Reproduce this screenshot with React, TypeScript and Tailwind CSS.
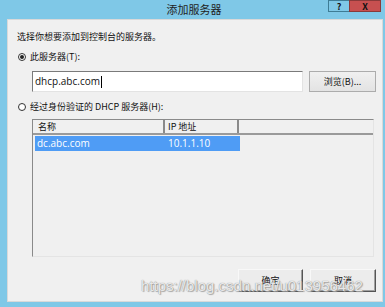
const cjk = "font-['Microsoft_YaHei','Noto_Sans_CJK_SC',sans-serif]";

function Radio({ checked }: { checked?: boolean }) {
  return (
    <span className="flex h-[8px] w-[8px] items-center justify-center rounded-full border border-[#333] bg-white">
      {checked && <span className="h-[4px] w-[4px] rounded-full bg-[#222]" />}
    </span>
  );
}

function Button3D({ label, className = '' }: { label: string; className?: string }) {
  return (
    <button
      className={`flex h-[23px] items-center justify-center border border-t-[#f8f8f8] border-l-[#f8f8f8] border-r-[#555] border-b-[#555] bg-[#ececec] text-[9px] text-[#111] shadow-[inset_-1px_-1px_0_#a0a0a0] ${className}`}
    >
      {label}
    </button>
  );
}

export default function App() {
  return (
    <div className={`relative flex h-[307px] w-[385px] flex-col bg-[#7fc8e7] ${cjk}`}>
      {/* title bar */}
      <div className="grid h-[19px] grid-cols-[1fr_auto_1fr]">
        <div />
        <div className="pl-[3px] pt-[2px] text-[11px] leading-[15px] text-[#222]">添加服务器</div>
        <div className="flex justify-end pr-[4px]">
          <div className="flex h-[12px] w-[21px] items-center justify-center border border-[#3e7c95] border-r-0 bg-[#7fc8e7] text-[9px] font-bold leading-none text-[#111]">
            ?
          </div>
          <div className="flex h-[12px] w-[32px] items-center justify-center border border-[#8a3a3a] bg-[#c75050] text-[9px] font-bold leading-none text-[#111]">
            X
          </div>
        </div>
      </div>

      {/* client area */}
      <div className="ml-[7px] mr-[2px] flex h-[283px] flex-col border border-[#d9d9d9] bg-[#f0f0f0] pl-[9px] pt-[11px] text-[9px] text-[#111]">
        <div className="h-[12px] leading-[12px]">选择你想要添加到控制台的服务器。</div>

        <div className="mt-[8px] flex h-[12px] items-center gap-[4px] pl-[1px]">
          <Radio checked />
          <span className="leading-[12px]">此服务器(T):</span>
        </div>

        <div className="mt-[8px] flex h-[21px] pl-[15px]">
          <div className="flex w-[271px] items-center border border-t-[#7a7a7a] border-l-[#7a7a7a] border-r-[#e3e3e3] border-b-[#e3e3e3] bg-white pl-[2px] font-['Segoe_UI','Open_Sans',sans-serif] text-[10px]">
            dhcp.abc.com
            <span className="ml-[1px] h-[12px] w-[1px] bg-black" />
          </div>
          <button className="ml-[6px] flex h-[21px] w-[67px] items-center justify-center border border-[#acacac] bg-gradient-to-b from-[#f0f0f0] to-[#e3e3e3] text-[9px]">
            浏览(B)...
          </button>
        </div>

        <div className="mt-[9px] flex h-[12px] items-center gap-[4px] pl-[1px]">
          <Radio />
          <span className="leading-[12px]">经过身份验证的 DHCP 服务器(H):</span>
        </div>

        {/* list view */}
        <div className="ml-[15px] mt-[6px] flex h-[138px] w-[342px] flex-col border border-t-[#8a8a8a] border-l-[#8a8a8a] border-r-[#e4e4e4] border-b-[#e4e4e4] bg-[#f0f0f0]">
          <div className="flex h-[15px] border-b-2 border-[#9a9a9a] bg-[#f0f0f0] leading-[13px]">
            <div className="w-[132px] border-r-2 border-[#8a8a8a] pl-[5px]">名称</div>
            <div className="w-[74px] border-r-2 border-[#8a8a8a] pl-[3px]">IP 地址</div>
            <div className="flex-1" />
          </div>
          <div className="ml-[2px] mt-[1px] flex h-[15px] w-[205px] items-center bg-[#4f9cf5] font-['Segoe_UI','Open_Sans',sans-serif] text-[10px] text-white">
            <span className="w-[133px] pl-[2px]">dc.abc.com</span>
            <span>10.1.1.10</span>
          </div>
        </div>

        <div className="mt-[12px] flex gap-[7px] pl-[221px]">
          <Button3D label="确定" className="w-[65px]" />
          <Button3D label="取消" className="w-[66px]" />
        </div>
      </div>

      {/* watermark */}
      <div className="pointer-events-none absolute left-[141px] top-[277px] font-['Liberation_Sans',Arial,sans-serif] text-[15px] leading-[18px] text-[#f6f6f6]/90 [text-shadow:0_0_1px_#777,1px_1px_1px_#aaa]">
        https://blog.csdn.net/u013956462
      </div>
    </div>
  );
}
